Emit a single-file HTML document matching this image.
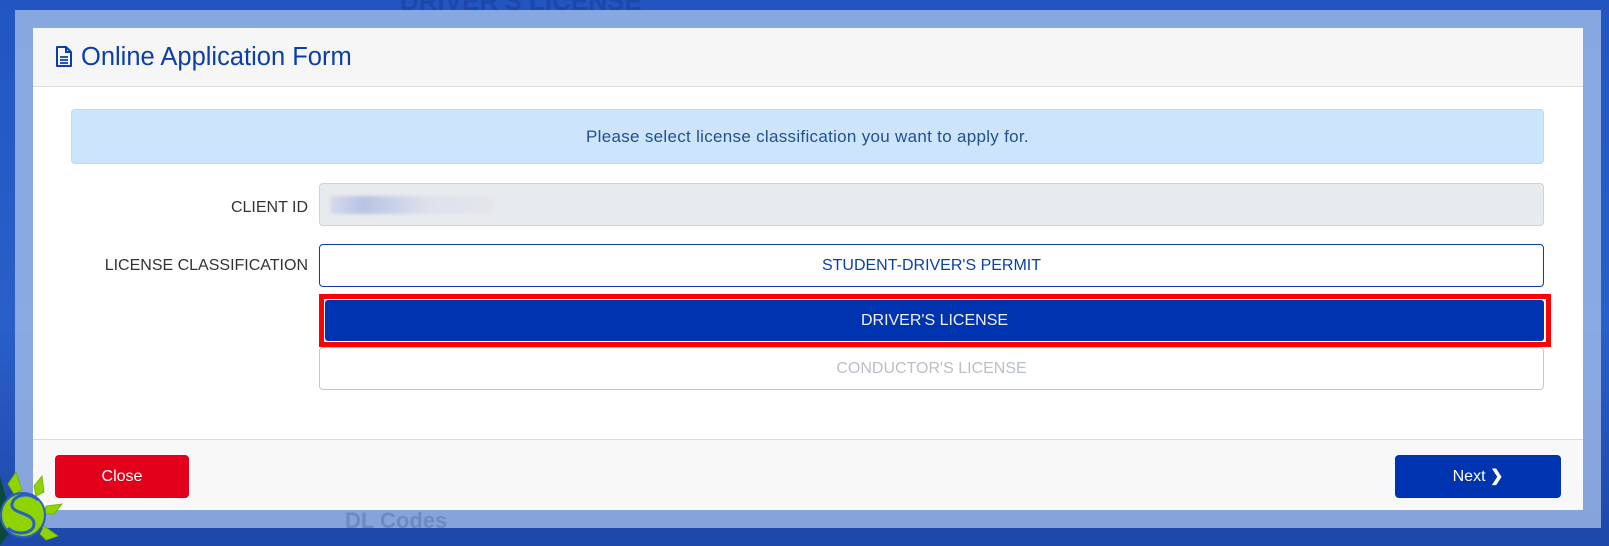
<!DOCTYPE html>
<html><head><meta charset="utf-8"><style>
*{box-sizing:border-box;margin:0;padding:0}
body{width:1609px;height:546px;overflow:hidden;position:relative;font-family:"Liberation Sans",sans-serif;background:linear-gradient(180deg,#2255c0 0%,#2a5fc8 60%,#1d47a8 100%)}
.frame{position:absolute;left:15px;top:10px;width:1586px;height:518px;background:rgba(170,195,235,0.75)}
.modal{position:absolute;left:33px;top:28px;width:1550px;height:482px;background:#fff}
.hdr{height:59px;background:#f6f6f6;border-bottom:1px solid #dcdcdc;position:relative}
.hdr .t{position:absolute;left:48px;top:15px;font-size:25.5px;color:#0b3ea8}
.hdr svg{position:absolute;left:22px;top:18px}
.alert{position:absolute;left:38px;top:81px;width:1473px;height:55px;background:#cce5fd;border:1px solid #b8daff;border-radius:4px;color:#23508f;font-size:17px;letter-spacing:0.3px;text-align:center;line-height:53px}
.lbl{position:absolute;right:1275px;font-size:16px;color:#333;white-space:nowrap}
.inp{position:absolute;left:286px;width:1225px;height:43px;border-radius:4px;font-size:16px;text-align:center;line-height:41px}
.foot{position:absolute;left:0;top:411px;width:1550px;height:71px;background:#f8f8f8;border-top:1px solid #dcdcdc}
.btn{position:absolute;top:15px;height:43px;border-radius:4px;color:#fff;font-size:16px;text-align:center;line-height:43px}
</style></head><body>
<div style="position:absolute;left:400px;top:-14px;font-size:26px;font-weight:bold;color:rgba(20,50,130,.35)">DRIVER'S LICENSE</div>
<div class="frame"></div>
<div style="position:absolute;left:345px;top:508px;font-size:22px;font-weight:bold;color:rgba(40,60,120,.25)">DL Codes</div>
<div class="modal">
 <div class="hdr">
  <svg width="18" height="22" viewBox="0 0 18 22"><path d="M2 1h9l5 5v14H2z" fill="none" stroke="#0b3ea8" stroke-width="2" stroke-linejoin="round"/><path d="M11 1v5h5" fill="none" stroke="#0b3ea8" stroke-width="2"/><path d="M5 11h8M5 14h8M5 17h8" stroke="#0b3ea8" stroke-width="1.8"/></svg>
  <div class="t">Online Application Form</div>
 </div>
 <div class="alert">Please select license classification you want to apply for.</div>
 <div class="lbl" style="top:171px">CLIENT ID</div>
 <div class="inp" style="top:155px;background:#e8ebee;border:1px solid #cfd3d7"><div style="position:absolute;left:10px;top:12px;width:165px;height:18px;background:linear-gradient(90deg,#d6dbea,#b8c3e3 20%,#dfe2ec 60%,#e4e6ec);filter:blur(1.5px);border-radius:3px"></div></div>
 <div class="lbl" style="top:229px">LICENSE CLASSIFICATION</div>
 <div class="inp" style="top:216px;border:1px solid #0b3ea8;color:#0b3ea8">STUDENT-DRIVER'S PERMIT</div>
 <div style="position:absolute;left:286px;top:266px;width:1232px;height:53px;border:5px solid #ff0000;background:#fff"><div style="position:absolute;left:1px;top:1px;right:2px;bottom:1px;background:#0033b0;border-radius:3px;color:#f0f0f0;font-size:16px;text-align:center;line-height:41px">DRIVER'S LICENSE</div></div>
 <div class="inp" style="top:319px;border:1px solid #c4c8cc;color:#b9c0c8">CONDUCTOR'S LICENSE</div>
 <div class="foot">
  <div class="btn" style="left:22px;width:134px;background:#e2001a">Close</div>
  <div class="btn" style="left:1362px;width:166px;background:#0033b0">Next <span style="font-weight:bold">&#x276F;</span></div>
 </div>
</div>
<svg style="position:absolute;left:0;top:446px" width="100" height="100" viewBox="0 0 100 100">
 <path d="M0 30 L14 80 L0 100Z" fill="#0a4a3a"/>
 <g fill="#8fd400" stroke="#6fae00" stroke-width="0.8">
  <path d="M8 38 L16 26 L22 44 L14 48Z"/>
  <path d="M34 40 L42 30 L44 46 L36 50Z"/>
  <path d="M46 60 L62 58 L54 68 L44 68Z"/>
  <path d="M44 80 L58 90 L46 94 L40 88Z"/>
 </g>
 <circle cx="23" cy="69" r="22" fill="#8fd400" stroke="#2a5fc8" stroke-width="2"/>
 <path d="M38 54 C30 46 14 48 12 58 C10 68 34 66 34 78 C34 88 16 90 8 82" fill="none" stroke="#2a5fc8" stroke-width="3"/>
</svg>
</body></html>
